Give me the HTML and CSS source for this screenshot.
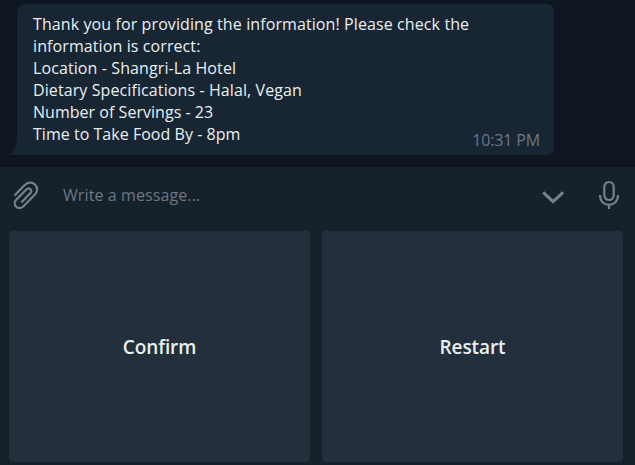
FILE: index.html
```html
<!DOCTYPE html>
<html lang="en">
<head>
<meta charset="utf-8">
<title>Chat</title>
<link rel="stylesheet" href="styles.css">
</head>
<body>
<main class="chat">
  <section class="history">
    <svg class="tail" width="10" height="12" viewBox="0 0 10 12"><path d="M10 0v12H1.500Q0 12 1 11Q7 7 7 0Z"/></svg>
    <article class="bubble">
      <p class="text">Thank you for providing the information! Please check the<br>information is correct:<br>Location - Shangri-La Hotel<br>Dietary Specifications - Halal, Vegan<br><span class="tight">Number of Servings - 23<br>Time to Take Food By - 8pm</span></p>
      <time class="time">10:31 PM</time>
    </article>
  </section>
  <section class="composer">
    <svg class="icon clip" width="28" height="30" viewBox="0 0 28 30"><path d="M2.500 15.500L12 5.800C15.500 2.200 20 1.500 23 4.500S26 11.500 22.500 15L11.500 26.300C9 28.800 6 28.700 4.200 26.800S2.200 21.700 4.500 19.400L13.800 10C15.500 8.300 17.300 8.200 18.500 9.300S19.500 12 18 13.600L9.300 22.500"/></svg>
    <span class="placeholder">Write a message...</span>
    <svg class="icon chevron" width="24" height="14" viewBox="0 0 24 14"><path d="M2.200 1.300l9.900 9.400 9.900-9.400"/></svg>
    <svg class="icon mic" width="22" height="30" viewBox="0 0 22 30"><rect x="6.300" y="2" width="9.400" height="18" rx="4.700"/><path d="M2 15v.8a9 9 0 0 0 18 0V15M11 24.800V29"/></svg>
  </section>
  <section class="keyboard">
    <button class="key">Confirm</button>
    <button class="key">Restart</button>
  </section>
</main>
</body>
</html>
```
FILE: styles.css
```css
* { box-sizing: border-box; }
body { margin: 0; background: #17212b; font-family: "Open Sans", sans-serif; }
.chat { width: 635px; height: 465px; display: flex; flex-direction: column; overflow: hidden; }
.history { height: 167px; background: #0e1621; padding: 4px 0 0 9px; display: flex; }
.tail { align-self: flex-end; margin-bottom: 12px; margin-right: -2px; fill: #182533; }
.bubble { width: 537px; height: 151px; background: #182533; border-radius: 7px 7px 7px 0; padding: 9px 14px 0 16px; color: #e9f0f2; }
.text { margin: 0; font-size: 16px; line-height: 22px; letter-spacing: 0.1px; white-space: nowrap; }
.tight { letter-spacing: 0.03px; }
.time { display: block; text-align: right; font-size: 16px; line-height: 22px; letter-spacing: -0.15px; margin-top: -16px; color: #6d7883; }
.composer { height: 64px; display: flex; align-items: flex-start; padding: 13px 15px 0 12px; }
.icon { fill: none; stroke: #74818a; stroke-width: 2.2; flex: none; }
.placeholder { font-size: 16px; line-height: 22px; letter-spacing: 0.1px; color: #6c7883; margin: 4px auto 0 23px; }
.chevron { margin: 11px 33px 0 0; stroke-width: 3; }
.keyboard { display: grid; grid-template-columns: 301px 301px; gap: 12px; padding-left: 9px; height: 231px; }
.key { border: 0; border-radius: 4px; background: #242f3d; color: #e9f0f2; font: 600 19px "Open Sans", sans-serif; letter-spacing: -0.1px; padding: 0; }
```
